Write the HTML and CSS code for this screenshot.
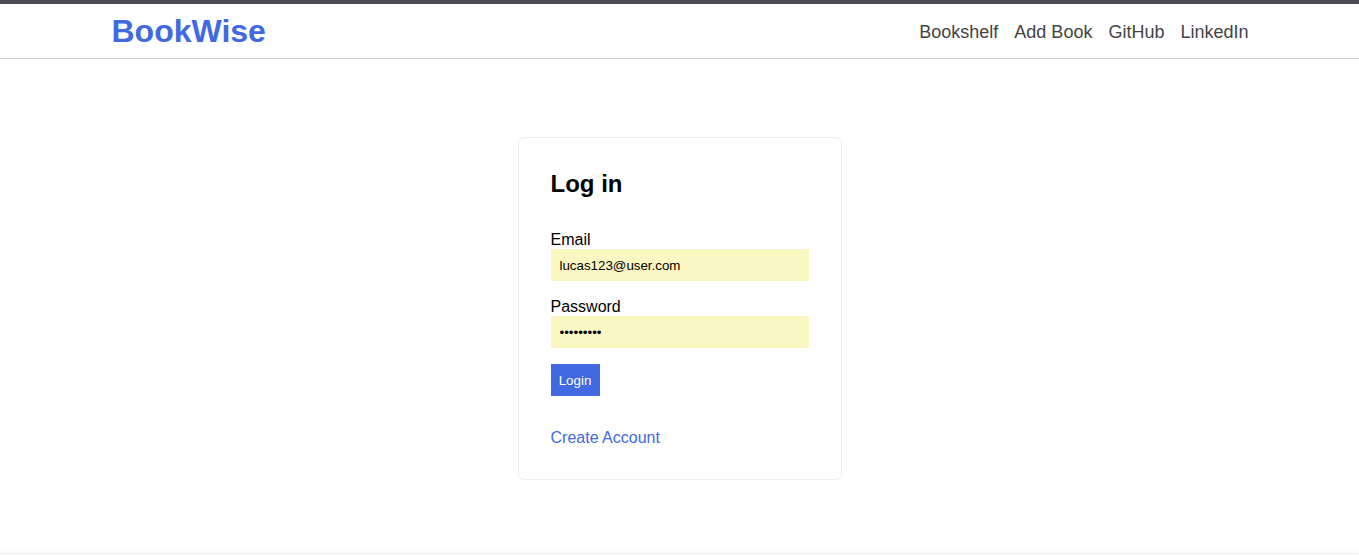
FILE: index.html
```html
<!DOCTYPE html>
<html lang="en">
<head>
<meta charset="utf-8">
<title>BookWise</title>
<link rel="stylesheet" href="styles.css">
</head>
<body>
<header class="site-header">
  <div class="container header-inner">
    <a class="logo" href="#">BookWise</a>
    <nav class="nav">
      <a href="#">Bookshelf</a>
      <a href="#">Add Book</a>
      <a href="#">GitHub</a>
      <a href="#">LinkedIn</a>
    </nav>
  </div>
</header>
<main class="main">
  <div class="card">
    <h2 class="card-title">Log in</h2>
    <form class="form">
      <label class="label" for="email">Email</label>
      <input class="input" id="email" type="email" value="lucas123@user.com">
      <label class="label label-gap" for="password">Password</label>
      <input class="input" id="password" type="password" value="123456789">
      <button class="btn" type="button">Login</button>
    </form>
    <a class="link" href="#">Create Account</a>
  </div>
</main>
<footer class="footer"></footer>
</body>
</html>
```
FILE: styles.css
```css
* { box-sizing: border-box; }
html, body { margin: 0; padding: 0; }
body {
  font-family: "Liberation Sans", Arial, sans-serif;
  background: #fff;
  color: #000;
}
.site-header {
  border-top: 4px solid #4b4d52;
  border-bottom: 1px solid #cfcfcf;
  height: 59px;
}
.container {
  width: 1136px;
  margin: 0 auto;
}
.header-inner {
  height: 54px;
  display: flex;
  align-items: center;
  justify-content: space-between;
}
.logo {
  font-size: 32px;
  font-weight: bold;
  color: #4169e1;
  text-decoration: none;
}
.nav {
  display: flex;
  gap: 16px;
  padding-top: 2px;
  margin-right: -1px;
}
.nav a {
  font-size: 18px;
  color: #444;
  text-decoration: none;
}
.main {
  padding: 78px 0 73px;
  display: flex;
  justify-content: center;
}
.card {
  width: 324px;
  border: 1px solid #eeeeee;
  border-radius: 6px;
  padding: 32px 32px 31px;
}
.card-title {
  font-size: 24px;
  font-weight: bold;
  margin: 0 0 32px;
  line-height: 27.6px;
}
.form {
  display: flex;
  flex-direction: column;
  align-items: flex-start;
}
.label {
  font-size: 16px;
  line-height: 18.4px;
  padding-top: 1px;
  margin: 0;
}
.label-gap { margin-top: 16px; }
.input {
  width: 258px;
  height: 32px;
  border: none;
  background: #faf7c3;
  padding: 0 9px;
  font-family: "Liberation Sans", Arial, sans-serif;
  font-size: 13.33px;
  color: #000;
  outline: none;
}
.btn {
  margin-top: 16px;
  width: 49px;
  height: 32px;
  padding: 0;
  border: none;
  background: #4169e1;
  color: #fff;
  font-family: "Liberation Sans", Arial, sans-serif;
  font-size: 13.33px;
}
.link {
  display: inline-block;
  margin-top: 33px;
  font-size: 16px;
  line-height: 18.4px;
  color: #4169e1;
  text-decoration: none;
}
.footer {
  border-top: 1px solid #f0f0f0;
  height: 20px;
  box-shadow: 0 -1px 3px rgba(0,0,0,0.04);
}
```
